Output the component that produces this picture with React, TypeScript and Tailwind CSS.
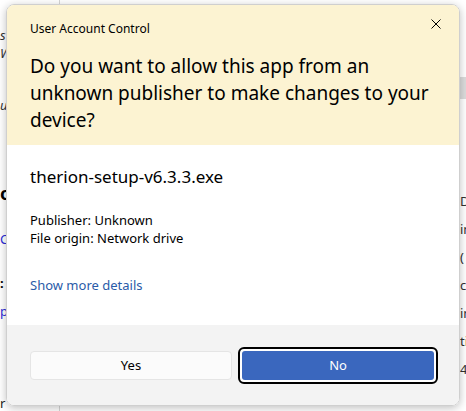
import React from 'react';

const font = { fontFamily: '"Noto Sans", "Open Sans", sans-serif' };

const CloseIcon: React.FC = () => (
    <svg width="10" height="10" viewBox="0 0 10 10" className="text-black">
        <path d="M0.5 0.5 L9.5 9.5 M9.5 0.5 L0.5 9.5" stroke="currentColor" strokeWidth="1" />
    </svg>
);

const Background: React.FC = () => {
    // bits of the page behind the dialog, only the edges show
    const rightBits = ['D.', 'in', '(', 'c', 'in', 'ti', '45'];
    return (
        <div className="flex h-[411px] w-[466px] bg-white text-[14px]" style={font}>
            <div className="w-[60px] border-r border-[#d6d6d6] flex flex-col text-[13px] leading-[14px]">
                <div className="mt-[28px] italic text-[#333]">s</div>
                <div className="mt-[4px] italic text-[#333]">Wa</div>
                <div className="mt-[38px] italic text-[#333]">u</div>
                <div className="mt-[72px] font-bold text-[18px] leading-[18px] text-black">o</div>
                <div className="mt-[30px] text-[#2b2bd6]">C</div>
                <div className="mt-[30px] font-bold text-black">:</div>
                <div className="mt-[14px] text-[#2b2bd6]">p</div>
                <div className="mt-[78px] text-[#222]">r</div>
            </div>
            <div className="flex-1 flex flex-col items-end">
                <div className="h-[77px]" />
                <div className="h-[22px] w-[6px] bg-[#dcdcdc]" />
                <div className="h-[88px]" />
                {rightBits.map((t, i) => (
                    <div key={i} className="h-[28px] w-[6px] overflow-hidden text-[13px] text-[#333] leading-[28px] whitespace-nowrap">{t}</div>
                ))}
            </div>
        </div>
    );
};

const App: React.FC = () => {
    return (
        <div className="relative w-[466px] h-[411px] overflow-hidden bg-white">
            <Background />
            <div
                className="absolute left-[6px] top-[4px] w-[454px] h-[402px] rounded-[8px] overflow-hidden border border-[#cfcfcf] shadow-[0_2px_8px_rgba(0,0,0,0.25)] flex flex-col text-black"
                style={font}
            >
                <div className="h-[140px] bg-[#fcf3d2] pl-[23px] pr-[12px] pt-[16px] flex flex-col">
                    <div className="flex items-start justify-between">
                        <span className="text-[12px] leading-[16px]">User Account Control</span>
                        <span className="mt-[-2px] mr-[6px]"><CloseIcon /></span>
                    </div>
                    <p className="mt-[16px] text-[19px] leading-[27px] pr-[14px]">
                        Do you want to allow this app from an unknown publisher to make changes to your device?
                    </p>
                </div>
                <div className="flex-1 bg-white pl-[23px] pt-[20px] flex flex-col">
                    <div className="text-[17px] leading-[24px]">therion-setup-v6.3.3.exe</div>
                    <div className="mt-[22px] text-[13px] leading-[18px]">
                        <div>Publisher: Unknown</div>
                        <div>File origin: Network drive</div>
                    </div>
                    <a href="#" className="mt-[29px] text-[13px] leading-[18px] text-[#2a5ba8]">Show more details</a>
                </div>
                <div className="h-[80px] bg-[#f3f3f3] pl-[23px] pt-[26px] flex items-start">
                    <button className="w-[202px] h-[29px] rounded-[4px] bg-[#fbfbfb] border border-[#e5e5e5] text-[13px] text-black">
                        Yes
                    </button>
                    <div className="ml-[6px] mt-[-4px] p-[2px] rounded-[6px] border-2 border-black bg-white">
                        <button className="block w-[192px] h-[29px] rounded-[3px] bg-[#3a67be] text-[13px] text-white">
                            No
                        </button>
                    </div>
                </div>
            </div>
        </div>
    );
};

export default App;
